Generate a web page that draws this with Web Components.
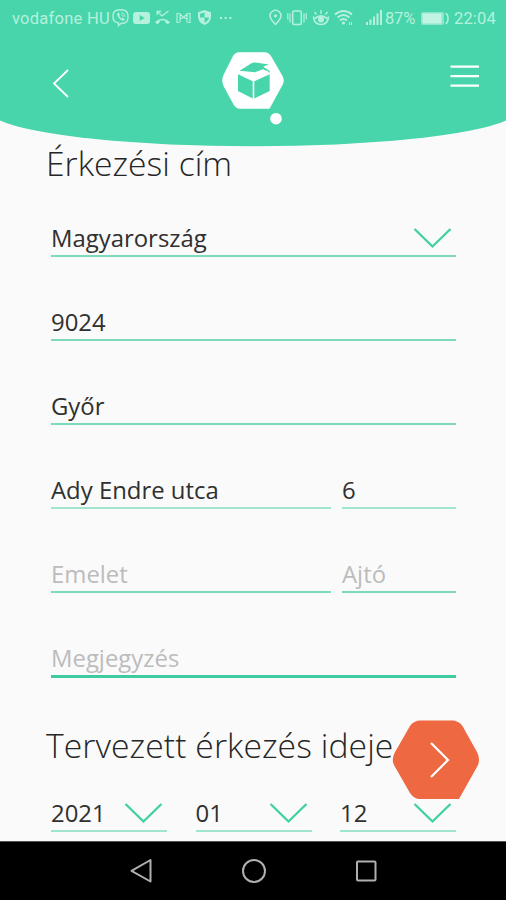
<!DOCTYPE html>
<html lang="hu">
<head>
<meta charset="utf-8">
<title>Érkezési cím</title>
<style>
  body {
    margin: 0;
    background: #fafafa;
    font-family: "Open Sans", sans-serif;
  }
</style>
</head>
<body>
<delivery-app>
  <status-bar slot="top" carrier="vodafone HU" battery="87%" time="22:04"></status-bar>
  <app-header slot="top"></app-header>
  <section-title>Érkezési cím</section-title>
  <form-row><form-field select>Magyarország</form-field></form-row>
  <form-row><form-field>9024</form-field></form-row>
  <form-row><form-field>Győr</form-field></form-row>
  <form-row columns="279.5px 1fr" gap="11.5px">
    <form-field soft>Ady Endre utca</form-field>
    <form-field soft>6</form-field>
  </form-row>
  <form-row columns="279.5px 1fr" gap="11.5px">
    <form-field empty>Emelet</form-field>
    <form-field empty>Ajtó</form-field>
  </form-row>
  <form-row><form-field empty active>Megjegyzés</form-field></form-row>
  <section-title second>Tervezett érkezés ideje</section-title>
  <form-row columns="1fr 1fr 1fr" gap="28.5px" short>
    <form-field select soft>2021</form-field>
    <form-field select soft>01</form-field>
    <form-field select soft>12</form-field>
  </form-row>
  <next-button slot="float"></next-button>
  <nav-bar slot="bottom"></nav-bar>
</delivery-app>

<script>
function define(name, html, setup) {
  customElements.define(name, class extends HTMLElement {
    constructor() {
      super();
      this.attachShadow({ mode: "open" });
    }
    connectedCallback() {
      this.shadowRoot.innerHTML = html;
      if (setup) setup(this, this.shadowRoot);
    }
  });
}

define("delivery-app", `
  <style>
    :host {
      display: flex;
      flex-direction: column;
      position: relative;
      height: 900px;
      width: 506px;
      overflow: hidden;
      background: #fafafa;
    }
    header { height: 147px; flex: none; position: relative; }
    .curve { position: absolute; top: 0; left: 0; display: block; }
    .bars { position: relative; }
    main { flex: 1; min-height: 0; padding: 0 50px 0 51px; }
  </style>
  <header>
    <svg class="curve" width="506" height="147" viewBox="0 0 506 147">
      <path fill="#48d5ab" d="M0 0H506V120.5A264 36 0 0 1 0 120.5Z"/>
    </svg>
    <div class="bars"><slot name="top"></slot></div>
  </header>
  <main><slot></slot></main>
  <slot name="float"></slot>
  <slot name="bottom"></slot>
`);

define("status-bar", `
  <style>
    :host {
      display: flex;
      align-items: center;
      height: 35px;
      padding: 0 10px 0 12px;
      box-sizing: border-box;
      font: 16.5px/35px Roboto, sans-serif;
      color: #b5f1dc;
      white-space: nowrap;
    }
    svg { display: block; flex: none; margin-top: -2px; }
    span { padding-top: 1px; }
    .carrier { width: 99px; letter-spacing: 0.25px; }
    .battery { width: 34px; letter-spacing: -0.2px; }
    .time { margin-left: auto; letter-spacing: 0.2px; }
  </style>
  <span class="carrier"></span>
  <svg width="157" height="22" viewBox="111 6 157 22" fill="none" stroke="#b5f1dc" stroke-width="1.4">
    <path d="M116 10.5Q120.5 9 125 10.5Q128 11.5 128 17Q128 22 124.5 23L121 23.5L118.5 25.5V23Q113 22 113 17Q113 11.5 116 10.5Z"/>
    <path d="M117 13.5Q117.5 19 123.5 21L125 19.2L122.8 17.7L121.5 18.5Q119.8 17.5 119.3 15.8L120 14.5L118.5 12.5Z" fill="#b5f1dc" stroke="none"/>
    <path d="M121 12.5Q125 13 125 17M121 14.8Q123 15 123 17" stroke-width=".9"/>
    <rect x="133" y="12" width="17" height="12" rx="3" fill="#b5f1dc" stroke="none"/>
    <path d="M139.700 15V21L144.700 18Z" fill="#48d5ab" stroke="none"/>
    <path d="M157.500 11.500L162 16L168.500 11M157.200 15V11.300H161" stroke-width="1.3"/>
    <path d="M155 22Q162.500 15.500 170 22L168 24.300L165.300 22.500V20.700Q162.500 20 159.700 20.700V22.500L157 24.300Z" fill="#b5f1dc" stroke="none"/>
    <path d="M179 13.5H177V22.5H179M188 13.5H190V22.5H188M180 22.5V14L183.5 17.5L187 14V22.5M180 19L183.5 17.5L187 19" stroke-width="1.2"/>
    <path d="M204.500 10L211 12.300V17Q211 22 204.500 25Q198 22 198 17V12.300Z" fill="#b5f1dc" stroke="none"/>
    <path d="M204.500 12.500V17.500H200Q200 15 200.200 13.800ZM204.500 17.500H209Q208.500 21 204.500 22.800Z" fill="#48d5ab" stroke="none"/>
    <path d="M220 18H222M224.700 18H226.700M229.400 18H231.400" stroke-width="1.8"/>
  </svg>
  <svg width="117" height="22" viewBox="268 6 117 22" fill="none" stroke="#b5f1dc" stroke-width="1.5">
    <path d="M275.500 24.500Q270 19 270 15.800A5.500 5.500 0 0 1 281 15.800Q281 19 275.500 24.500Z"/>
    <circle cx="275.500" cy="15.800" r="1.600" fill="#b5f1dc" stroke="none"/>
    <rect x="292.700" y="11" width="8.600" height="13.500" rx="1.500"/>
    <path d="M290 13.500V22.500M287.800 13V19.500M304 13.500V22.500M306.200 13V19.500" stroke-width="1.2"/>
    <path d="M313.500 16.500Q314 24.500 321 24.500Q328 24.500 328.500 16.500M315 18.500Q321 13.500 327 18.500" stroke-width="1.7"/>
    <circle cx="321" cy="19.500" r="3" fill="#b5f1dc" stroke="none"/>
    <path d="M321 14V10M316.500 14.500L314.500 12M325.500 14.500L327.500 12" stroke-width="1.4"/>
    <path d="M335 14.500Q343.500 7.500 352 14.500M337.500 17.500Q343.500 12.500 349.500 17.500M340 20.500Q343.500 17.500 347 20.500" stroke-width="1.9"/>
    <circle cx="343.500" cy="23" r="1.600" fill="#b5f1dc" stroke="none"/>
    <path d="M349.500 22V25M351.500 22V25" stroke-width="1"/>
    <path d="M367 22V25M370.500 19.500V25M374 16.500V25M377.500 13.500V25M381 10V25" stroke-width="2"/>
  </svg>
  <span class="battery"></span>
  <svg width="32" height="22" viewBox="419 6 32 22">
    <rect x="421" y="12" width="23" height="13" rx="2" fill="#8de4ca"/>
    <rect x="422.500" y="13.500" width="19" height="10" fill="#c1f4e3"/>
    <path d="M445.500 13.500Q448 14 448 18.500Q448 23 445.500 23.500" fill="none" stroke="#b5f1dc" stroke-width="1.5"/>
  </svg>
  <span class="time"></span>
`, (el, root) => {
  for (const key of ["carrier", "battery", "time"])
    root.querySelector("." + key).textContent = el.getAttribute(key);
});

define("app-header", `
  <style>
    :host {
      display: grid;
      grid-template-columns: 170px 1fr 170px;
      height: 95px;
    }
    svg { display: block; }
    .back { margin: 32px 0 0 50px; }
    .logo { margin: 15px auto 0; }
    .menu { margin: 28px 26px 0 auto; }
  </style>
  <svg class="back" width="22" height="34" viewBox="50 67 22 34">
    <path d="M68 70L54 83.5L68 97" fill="none" stroke="#fff" stroke-width="1.8"/>
  </svg>
  <svg class="logo" width="66" height="78" viewBox="220 50 66 78">
    <path fill="#fff" d="M239 52.300H264.500Q268.500 52.300 271 56L282.500 76Q285 80.500 282.500 85L269.500 108.700H240Q236 108.700 233.500 104.500L223.500 86Q221 80.500 223.500 75L233 56Q235.500 52.300 239 52.300Z"/>
    <g fill="#48d5ab">
      <path d="M238 74.200L252.700 81.300V98.500L238 91Z"/>
      <path d="M254.300 81.300L269.700 74.200V91L254.300 98.500Z"/>
      <path d="M239.500 70.800L251 63.500Q253 62.200 255.500 62.500L269 64.500L263.500 66.500L265 68.500L255 72.200Z"/>
      <path d="M264.500 67.500L269.700 71V73L267.500 71L263.500 69.800Z"/>
    </g>
    <circle cx="276" cy="118.700" r="5.800" fill="#fff"/>
  </svg>
  <svg class="menu" width="30" height="26" viewBox="450 63 30 26">
    <path d="M450.500 66.700H479M450.500 76.200H479M450.500 85.700H479" stroke="#fff" stroke-width="2.2"/>
  </svg>
`);

define("section-title", `
  <style>
    :host {
      display: block;
      height: 26px;
      margin-left: -5px;
      font-size: 33.7px;
      font-weight: 300;
      line-height: 32px;
      color: #262626;
      white-space: nowrap;
    }
    :host([second]) {
      height: 70px;
      padding-top: 52px;
      box-sizing: border-box;
      letter-spacing: 0.07px;
    }
  </style>
  <slot></slot>
`);

define("form-row", `
  <style>
    :host { display: grid; height: 84px; }
    :host([short]) { height: 85px; }
  </style>
  <slot></slot>
`, el => {
  el.style.gridTemplateColumns = el.getAttribute("columns") || "1fr";
  el.style.columnGap = el.getAttribute("gap") || "0";
});

define("form-field", `
  <style>
    :host {
      display: flex;
      align-items: flex-end;
      justify-content: space-between;
      box-sizing: border-box;
      height: 100%;
      border-bottom: 2px solid #7fdabc;
      font-size: 23.9px;
      line-height: 34px;
      color: #303030;
      white-space: nowrap;
    }
    :host([soft]) { border-color: #a0e5cf; }
    :host([empty]) { color: #bcbcbc; }
    :host([active]) {
      height: calc(100% + 1px);
      border-bottom: 3px solid #3dcb9f;
    }
    svg { display: none; margin: 0 4px 5px 0; }
    :host([select]) svg { display: block; }
  </style>
  <span><slot></slot></span>
  <svg width="40" height="24" viewBox="0 0 40 24">
    <path d="M2.500 3L20.500 20.500L38.500 3" fill="none" stroke="#3fd0a4" stroke-width="2.3"/>
  </svg>
`);

define("next-button", `
  <style>
    :host { position: absolute; left: 391px; top: 719px; }
    svg { display: block; }
  </style>
  <svg width="90" height="82" viewBox="391 719 90 82">
    <path fill="#ee6842" d="M420 720.500H452Q458.500 720.500 462.500 726L477.500 753Q480.500 760 477.500 766L459 799H420Q414 799 410 793L394.500 766Q391 760 394.500 753L410 726Q414 720.500 420 720.500Z"/>
    <path d="M431 743L448 760L431 777" fill="none" stroke="#fff" stroke-width="2.2"/>
  </svg>
`);

define("nav-bar", `
  <style>
    :host {
      display: flex;
      justify-content: space-between;
      align-items: center;
      flex: none;
      height: 59px;
      padding: 0 127px 0 128px;
      box-sizing: border-box;
      background: #000;
      border-top: 1px solid #555;
    }
    svg { fill: none; stroke: #b0b0b0; stroke-width: 2; stroke-linejoin: round; }
  </style>
  <svg width="26" height="28" viewBox="0 0 26 28"><path d="M22.5 3V24.5L3.5 13.8Z"/></svg>
  <svg width="26" height="28" viewBox="0 0 26 28"><circle cx="13" cy="14" r="11"/></svg>
  <svg width="26" height="28" viewBox="0 0 26 28"><rect x="4" y="4.5" width="18.5" height="19" rx="1"/></svg>
`);
</script>
</body>
</html>
